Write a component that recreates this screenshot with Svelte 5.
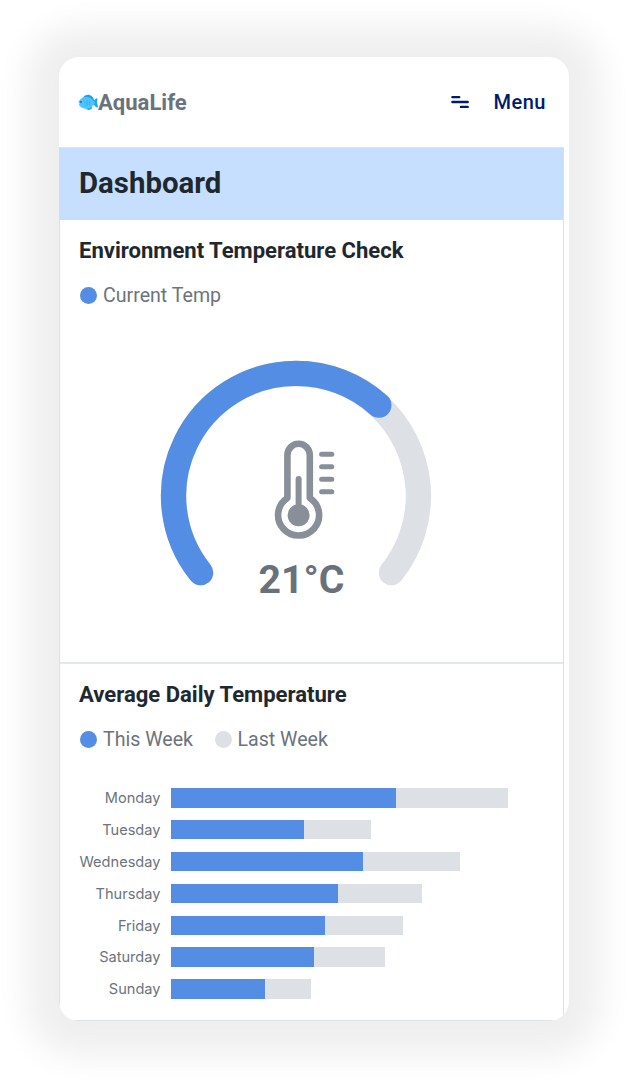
<script>
  const days = [
    { name: 'Monday', current: 225, previous: 112.5 },
    { name: 'Tuesday', current: 133.5, previous: 67 },
    { name: 'Wednesday', current: 192.5, previous: 96.5 },
    { name: 'Thursday', current: 167.5, previous: 83.5 },
    { name: 'Friday', current: 154.5, previous: 77.5 },
    { name: 'Saturday', current: 143, previous: 71.5 },
    { name: 'Sunday', current: 94, previous: 46.5 }
  ];
</script>

<main>
  <div class="card">
    <header>
      <div class="brand">
        <svg class="fish" viewBox="0 0 20 17" width="20" height="17" aria-hidden="true">
          <path d="M5 4C6.5 .3 11.5-.3 14 2.6c1.4 1.1 2 2.8 2.2 4.6L6 7zM7.5 13.5c1 2.6 3.4 3 6.2 1.6l.2-2.5zM15 8.2c1-1.5 2.4-4 3.9-4 1.2.2-.1 3.1.1 4.3.1 1.4 1.5 4.1.6 5-1.6.2-2.9-2.5-4.6-3.3z" fill="#16a7f5" />
          <path d="M.3 8.5C1.5 4.8 4.9 2.8 8.3 2.9c3.9.1 6.6 2.8 8.8 5.8-2.1 3.6-5.4 6.3-9.4 6C4 14.4 1.7 12.8.8 10.5l1-.8z" fill="#50c4ff" />
          <path d="M9 6.2v5.8M11.6 6.8v4.8" stroke="#239fe4" stroke-width=".6" fill="none" />
          <path d="M5.5 5.3c1.5 2.3 1.4 5-.1 7.3" stroke="#38b2f2" stroke-width=".6" fill="none" />
          <circle cx="3" cy="7.9" r=".9" fill="#145f8c" />
        </svg>
        <span>AquaLife</span>
      </div>
      <div class="menu">
        <svg viewBox="0 0 18 14" width="18" height="14" aria-hidden="true">
          <path d="M1.4 2.1h6.8M1.4 7h15.3M10 11.9h6.7" stroke="#001b6c" stroke-width="2.4" stroke-linecap="round" />
        </svg>
        <span>Menu</span>
      </div>
    </header>

    <div class="content">
      <h1>Dashboard</h1>

      <section class="environment">
        <h2>Environment Temperature Check</h2>
        <div class="legend"><span class="item"><i></i><span>Current Temp</span></span></div>
        <svg class="gauge" viewBox="0 0 270 240" width="270" height="240" role="img">
          <path d="M39.6 212.6A122.4 122.4 0 1 1 230.4 212.6" stroke="#dde0e5" />
          <path d="M39.6 212.6A122.4 122.4 0 0 1 135 13.4A122.4 122.4 0 0 1 217.8 45.2" stroke="#548de4" />
          <g class="thermometer">
            <path d="M126.4 137.9V95a11.2 11.2 0 0 1 22.4 0v42.9a20.5 20.5 0 1 1-22.4 0z" />
            <path class="mercury" d="M137.6 119v36" />
            <circle cx="137.6" cy="155.2" r="11" />
            <path class="ticks" d="M160.6 94.3h10.2M160.6 106.8h10.2M160.6 119.2h10.2M160.6 131.7h10.2" />
          </g>
          <text x="140.4" y="233" text-anchor="middle">21°C</text>
        </svg>
      </section>

      <section class="daily">
        <h2>Average Daily Temperature</h2>
        <div class="legend">
          <span class="item"><i></i><span>This Week</span></span>
          <span class="item last"><i></i><span>Last Week</span></span>
        </div>
        <div class="chart">
          {#each days as day}
            <div class="day">
              <span>{day.name}</span>
              <div class="bar" style="width: {day.current}px"></div>
              <div class="bar previous" style="width: {day.previous}px"></div>
            </div>
          {/each}
        </div>
      </section>
    </div>
  </div>
</main>

<style>
  :global(body) { margin: 0; background: #fff; }
  main {
    box-sizing: border-box;
    width: 634px;
    height: 1089px;
    padding: 57px 65px 0 59px;
    overflow: hidden;
    font-family: Roboto, sans-serif;
  }
  .card {
    display: flex;
    flex-direction: column;
    width: 510px;
    height: 964px;
    overflow: hidden;
    border-radius: 20px;
    background: #fff;
    box-shadow: 0 2px 34px 32px #efefef;
  }
  header {
    display: flex;
    flex: none;
    align-items: center;
    justify-content: space-between;
    height: 90px;
    padding: 0 23px 0 19px;
  }
  .brand, .menu { display: flex; align-items: center; }
  .brand { color: #6a727b; font-size: 22.05px; font-weight: 700; line-height: 30px; }
  .brand span { padding-top: 1px; }
  .menu { gap: 25px; color: #001b6c; font-size: 20px; font-weight: 500; letter-spacing: .5px; }
  .content {
    flex: 1;
    box-sizing: border-box;
    width: 505px;
    border: 1px solid #dde1e7;
    border-top-color: #dfe4eb;
  }
  h1 {
    box-sizing: border-box;
    height: 72px;
    margin: 0 0 0 -1px;
    padding-left: 20px;
    border-bottom: 1px solid #d5dde7;
    background: #c7dfff;
    color: #20282e;
    font-size: 29.4px;
    font-weight: 700;
    line-height: 71px;
  }
  section { box-sizing: border-box; padding: 17px 19px 0; }
  .environment { height: 444px; border-bottom: 2px solid #e4e8ec; }
  h2 { margin: 0; color: #20282e; font-size: 22.05px; font-weight: 700; line-height: 28px; }
  .legend { display: flex; gap: 21.5px; height: 28px; margin: 16px 0 0 1px; }
  .item { display: flex; align-items: center; gap: 6px; color: #6b737c; font-size: 19.6px; line-height: 28px; }
  .item span { padding-top: 2px; line-height: 26px; }
  i { width: 17px; height: 17px; border-radius: 50%; background: #548de4; }
  .last i { background: #dde0e5; }
  .gauge { display: block; margin: 51px 0 0 82px; overflow: visible; fill: none; }
  .gauge > path { stroke-width: 25.3; stroke-linecap: round; }
  .thermometer path { stroke: #888f99; stroke-width: 6.6; stroke-linejoin: round; }
  .thermometer .mercury { stroke-width: 6; stroke-linecap: round; }
  .thermometer .ticks { stroke-width: 5; stroke-linecap: round; }
  .thermometer circle { fill: #888f99; }
  .gauge text { fill: #69717a; font-size: 39.2px; font-weight: 700; }
  .chart { display: grid; gap: 12.3px; margin-top: 35px; }
  .day { display: flex; height: 19.6px; }
  .day span {
    width: 81.5px;
    margin-right: 10px;
    color: #6b737c;
    font: 14.6px/21px Inter, sans-serif;
    text-align: right;
  }
  .bar { height: 19.6px; background: #548de4; }
  .previous { background: #dde0e5; }
</style>
